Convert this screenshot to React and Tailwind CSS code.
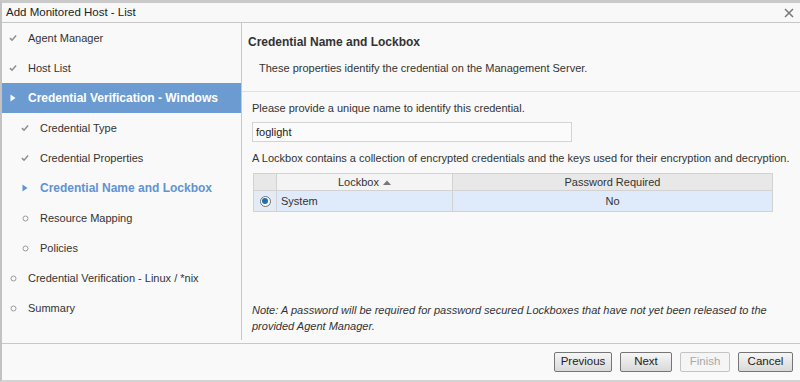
import React from 'react';

const font = "font-['Liberation_Sans',Arial,sans-serif]";

const Check = () => (
    <svg width="9" height="8" viewBox="0 0 9 8">
        <path d="M1 4.2 L3.4 6.4 L8 1.2" fill="none" stroke="#8f8f8f" strokeWidth="1.7" />
    </svg>
);

const Arrow = ({ color }) => (
    <svg width="6" height="8" viewBox="0 0 6 8">
        <path d="M0.5 0.5 L5.5 4 L0.5 7.5 Z" fill={color} />
    </svg>
);

const Dot = () => (
    <svg width="7" height="7" viewBox="0 0 7 7">
        <circle cx="3.5" cy="3.5" r="2.5" fill="none" stroke="#9a9a9a" strokeWidth="1" />
    </svg>
);

const steps = [
    { label: 'Agent Manager', state: 'done', level: 0 },
    { label: 'Host List', state: 'done', level: 0 },
    { label: 'Credential Verification - Windows', state: 'active', level: 0 },
    { label: 'Credential Type', state: 'done', level: 1 },
    { label: 'Credential Properties', state: 'done', level: 1 },
    { label: 'Credential Name and Lockbox', state: 'current', level: 1 },
    { label: 'Resource Mapping', state: 'todo', level: 1 },
    { label: 'Policies', state: 'todo', level: 1 },
    { label: 'Credential Verification - Linux / *nix', state: 'todo', level: 0 },
    { label: 'Summary', state: 'todo', level: 0 },
];

const StepRow = ({ step }) => {
    const active = step.state === 'active';
    const current = step.state === 'current';
    return (
        <div
            className={`flex items-center h-[30px] ${step.level ? 'pl-[19px]' : 'pl-[7px]'} ${active ? 'bg-[#6b9bd0]' : ''}`}
        >
            <div className="w-[8px] flex justify-center">
                {step.state === 'done' && <Check />}
                {active && <Arrow color="#ffffff" />}
                {current && <Arrow color="#5f93d1" />}
                {step.state === 'todo' && <Dot />}
            </div>
            <span
                className={`ml-[11px] whitespace-nowrap ${
                    active
                        ? 'text-white font-bold text-[12px]'
                        : current
                        ? 'text-[#5f93d1] font-bold text-[12px]'
                        : 'text-[#333] text-[11px]'
                }`}
            >
                {step.label}
            </span>
        </div>
    );
};

const Btn = ({ children, disabled, w }) => (
    <button
        className={`${w} h-[20px] rounded-[2px] border text-[11.5px] leading-none ${
            disabled
                ? 'border-[#c4c4c4] bg-[#f5f5f5] text-[#a8a8a8]'
                : 'border-[#767676] bg-gradient-to-b from-[#f6f6f6] to-[#d9d9d9] text-[#222]'
        }`}
    >
        {children}
    </button>
);

export default function App() {
    return (
        <div className={`${font} w-[800px] h-[382px] bg-[#f9f9f9] border-t-[3px] border-l-[2px] border-b-2 border-t-[#c9c9c9] border-l-[#c2c2c2] border-b-[#d4d4d4] flex flex-col text-[#333] overflow-hidden`}>
            {/* title bar */}
            <div className="h-[20px] shrink-0 flex items-center justify-between pl-[4px] pr-[6px] border-b border-[#c6c6c6] bg-[#f8f8f8]">
                <span className="text-[11.5px] text-[#222]">Add Monitored Host - List</span>
                <svg width="10" height="10" viewBox="0 0 10 10">
                    <path d="M1 1 L9 9 M9 1 L1 9" stroke="#777" strokeWidth="1.5" />
                </svg>
            </div>

            {/* body */}
            <div className="flex flex-1 min-h-0 pb-[3px]">
                <div className="w-[240px] shrink-0 border-r border-[#c8c8c8]">
                    {steps.map((s) => (
                        <StepRow key={s.label} step={s} />
                    ))}
                </div>

                <div className="flex-1 flex flex-col min-w-0">
                    <div className="h-[69px] shrink-0 border-b border-[#e0e0e0] pt-[10px]">
                        <div className="pl-[6px] text-[12px] font-bold text-[#333]">Credential Name and Lockbox</div>
                        <div className="pl-[17px] mt-[9px] text-[11px]">
                            These properties identify the credential on the Management Server.
                        </div>
                    </div>

                    <div className="pl-[10px] pr-[14px] pt-[8px] flex flex-col flex-1 text-[11px]">
                        <div className="h-[16px]">Please provide a unique name to identify this credential.</div>
                        <div className="mt-[6px] w-[320px] h-[20px] border border-[#d4d4d4] bg-[#fbfbfb] flex items-center pl-[3px] text-[#222]">
                            foglight
                        </div>
                        <div className="mt-[8px] h-[16px] whitespace-nowrap">
                            A Lockbox contains a collection of encrypted credentials and the keys used for their encryption and decryption.
                        </div>

                        <div className="mt-[7px] ml-[1px] w-[520px] border border-[#d2d2d2]">
                            <div className="flex h-[17px] bg-[#e8e8e8] border-b border-[#d2d2d2]">
                                <div className="w-[23px] border-r border-[#d2d2d2]" />
                                <div className="w-[176px] border-r border-[#d2d2d2] bg-[#f4f4f4] flex items-center justify-center gap-[4px]">
                                    Lockbox
                                    <svg width="8" height="5" viewBox="0 0 8 5">
                                        <path d="M0 5 L4 0.5 L8 5 Z" fill="#777" />
                                    </svg>
                                </div>
                                <div className="flex-1 flex items-center justify-center">Password Required</div>
                            </div>
                            <div className="flex h-[20px] bg-[#dfeafb]">
                                <div className="w-[23px] border-r border-[#d2d2d2] flex items-center justify-center bg-[#e4ebf4]">
                                    <div className="w-[11px] h-[11px] rounded-full border border-[#6f6f6f] bg-white flex items-center justify-center">
                                        <div className="w-[6px] h-[6px] rounded-full bg-[#1d6fb0]" />
                                    </div>
                                </div>
                                <div className="w-[176px] border-r border-[#d2d2d2] flex items-center pl-[4px]">System</div>
                                <div className="flex-1 flex items-center justify-center">No</div>
                            </div>
                        </div>

                        <div className="mt-auto pb-[6px] italic leading-[16px] text-[#333] w-[525px]">
                            Note: A password will be required for password secured Lockboxes that have not yet been released to the provided Agent Manager.
                        </div>
                    </div>
                </div>
            </div>

            {/* footer */}
            <div className="h-[37px] shrink-0 border-t border-[#c8c8c8] flex items-center justify-end gap-[8px] pr-[7px]">
                <Btn w="w-[58px]">Previous</Btn>
                <Btn w="w-[52px]">Next</Btn>
                <Btn w="w-[50px]" disabled>Finish</Btn>
                <Btn w="w-[55px]">Cancel</Btn>
            </div>
        </div>
    );
}
